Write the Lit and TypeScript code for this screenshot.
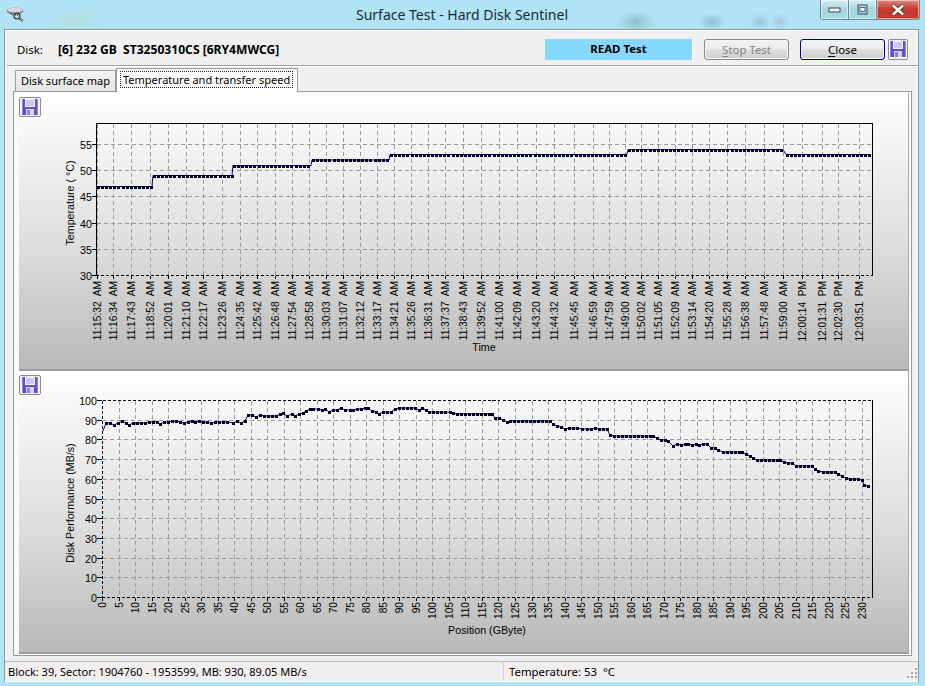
import {LitElement, html, css, svg} from 'lit';
import {customElement} from 'lit/decorators.js';

const TIMES = [
  '11:15:32 AM', '11:16:34 AM', '11:17:43 AM', '11:18:52 AM', '11:20:01 AM', '11:21:10 AM',
  '11:22:17 AM', '11:23:26 AM', '11:24:35 AM', '11:25:42 AM', '11:26:48 AM', '11:27:54 AM',
  '11:28:58 AM', '11:30:03 AM', '11:31:07 AM', '11:32:12 AM', '11:33:17 AM', '11:34:21 AM',
  '11:35:26 AM', '11:36:31 AM', '11:37:37 AM', '11:38:43 AM', '11:39:52 AM', '11:41:00 AM',
  '11:42:09 AM', '11:43:20 AM', '11:44:32 AM', '11:45:45 AM', '11:46:59 AM', '11:47:59 AM',
  '11:49:00 AM', '11:50:02 AM', '11:51:05 AM', '11:52:09 AM', '11:53:14 AM', '11:54:20 AM',
  '11:55:28 AM', '11:56:38 AM', '11:57:48 AM', '11:59:00 AM', '12:00:14 PM', '12:01:31 PM',
  '12:02:30 PM', '12:03:51 PM',
];

// x position of a time label, the axis is linear in seconds
const timeX = (t: string) => {
  const [h, m, s] = t.split(' ')[0].split(':').map(Number);
  return Math.round(97 + (h * 3600 + m * 60 + s - 40532) * 0.2629);
};

// temperature runs: from x, to x, y
const TEMP_RUNS = [
  [97, 152, 187.5],
  [153, 232, 176.5],
  [233, 311, 166.5],
  [312, 389, 161],
  [390, 627, 155.5],
  [628, 783, 150.5],
  [786, 871, 155.5],
];

// read from the reference, x then y in page pixels
const PERF: number[][] = [
  [106,424],[110,424],[114,426],[118,424],[122,422],[126,424],[129,426],[133,424],[137,424],[141,424],
  [145,424],[149,423],[153,423],[157,423],[160,425],[164,423],[168,423],[172,422],[176,422],[180,423],
  [184,424],[188,423],[192,422],[195,423],[199,422],[203,423],[207,423],[211,424],[215,423],[219,423],
  [223,423],[227,423],[233,424],[237,422],[241,424],[245,422],[248,416],[252,416],[256,418],[260,416],
  [264,417],[268,417],[272,417],[276,417],[280,415],[283,414],[287,417],[292,415],[295,417],[299,415],
  [303,414],[306,412],[310,410],[313,410],[318,410],[322,411],[325,410],[329,413],[333,411],[337,411],
  [341,409],[345,411],[350,411],[353,411],[357,410],[361,410],[365,409],[368,409],[372,412],[376,413],
  [379,415],[383,413],[387,413],[391,413],[395,410],[399,409],[403,409],[407,409],[411,409],[415,409],
  [419,411],[422,409],[426,411],[429,413],[433,413],[437,413],[441,413],[445,413],[450,413],[453,414],
  [457,415],[461,415],[465,415],[469,415],[473,415],[477,415],[481,415],[485,415],[489,415],[492,415],
  [495,419],[499,419],[503,421],[507,423],[510,422],[514,422],[518,422],[522,422],[526,422],[530,422],
  [534,422],[538,422],[542,422],[546,422],[550,422],[553,425],[557,427],[561,428],[565,430],[569,429],
  [573,429],[577,429],[582,430],[587,430],[591,430],[595,429],[599,430],[603,430],[607,430],[610,436],
  [614,437],[618,437],[622,437],[626,437],[630,437],[634,437],[638,437],[642,437],[646,437],[650,437],
  [653,437],[657,439],[661,441],[665,441],[668,442],[673,447],[677,445],[681,446],[685,445],[688,445],
  [692,446],[696,445],[699,446],[703,445],[707,445],[711,449],[715,449],[718,451],[723,453],[727,453],
  [731,453],[735,453],[739,453],[742,453],[746,455],[750,457],[753,459],[757,461],[761,461],[765,461],
  [769,461],[773,461],[777,461],[780,461],[784,463],[788,464],[792,464],[796,467],[800,467],[804,467],
  [808,467],[812,467],[815,470],[818,472],[823,473],[827,473],[831,473],[835,473],[838,475],[842,477],
  [846,479],[850,480],[854,480],[858,480],[862,481],[864,486],[868,487],
];

const squares = (pts: number[][]) =>
  pts.map(([x, y]) => `M${x - 1} ${Math.round(y) - 1}h3v3h-3z`).join('');

const floppy = () => html`<svg class="floppy" viewBox="0 0 16 16">
  <path d="M0 0H15L16 1V16H0Z" fill="#5f50cc"/>
  <path d="M0 0H1V16H0ZM15 1H16V16H15Z" fill="#8f84e2"/>
  <rect x="3" y="0" width="10" height="8" fill="#f4f2ff"/>
  <path d="M4 2H12M4 4H12M4 6H12" stroke="#a79cec" stroke-width="1"/>
  <rect x="4" y="10" width="8" height="6" fill="#d6d2ee"/>
  <rect x="5" y="11" width="3" height="5" fill="#8d82d8"/>
</svg>`;

@customElement('app-root')
class AppRoot extends LitElement {
  static override styles = css`
    :host {
      display: flex;
      flex-direction: column;
      width: 925px;
      height: 686px;
      overflow: hidden;
      font-family: 'Noto Sans', 'Open Sans', sans-serif;
      font-size: 11.4px;
      color: #000;
      background:
        radial-gradient(ellipse 20px 11px at 636px 22px, #8fc0cc, transparent),
        radial-gradient(ellipse 14px 9px at 712px 22px, #8fc3d2, transparent),
        radial-gradient(ellipse 10px 9px at 760px 22px, #a0c4e0, transparent),
        radial-gradient(ellipse 10px 9px at 780px 22px, #a8c8e2, transparent),
        radial-gradient(ellipse 26px 14px at 75px 22px, #b4e0dc, transparent),
        #b0e3f4;
    }

    .titlebar {
      display: grid;
      grid-template-columns: 1fr auto 1fr;
      height: 29px;
      flex: none;
    }

    .app-icon {
      width: 20px;
      height: 20px;
      margin: 4px 0 0 5px;
    }

    .title {
      font-size: 14px;
      line-height: 29px;
      color: #1a2a33;
      padding-left: 1px;
      padding-right: 2px;
      white-space: nowrap;
    }

    .win-buttons {
      justify-self: end;
      display: flex;
      height: 20px;
      margin-right: 5px;
      border: 1px solid #6f8794;
      border-top: none;
      border-radius: 0 0 3px 3px;
      box-sizing: border-box;
      width: 100px;
      overflow: hidden;
    }

    .win-btn {
      display: flex;
      align-items: center;
      justify-content: center;
      width: 27px;
      border-right: 1px solid #6f8794;
      background: linear-gradient(#d4edf6, #a8d6e2 50%, #a5dbe6);
      box-shadow: inset 0 0 0 1px #ffffff80;
    }

    .win-close {
      flex: 1;
      border-right: none;
      background: linear-gradient(#dc8a80, #c6392f 50%, #c23a30);
    }

    .client {
      flex: 1;
      display: flex;
      flex-direction: column;
      margin: 0 6px 4px 4px;
      border: 1px solid #8b9aa3;
      border-bottom: none;
      background: #f0f0f0;
      box-shadow: inset 0 0 0 1px #ffffff;
    }

    .header {
      flex: none;
      height: 36px;
      box-sizing: border-box;
      display: flex;
      align-items: center;
      padding: 0 10px 0 10px;
      margin-left: 2px;
      border-bottom: 1px solid #a3a3a3;
      box-shadow: 0 1px 0 #fff;
    }

    .disk-label {
      width: 41px;
      margin-top: 3px;
    }

    .disk-name {
      font-size: 12.1px;
      font-weight: 700;
      white-space: pre;
      flex: 1;
      margin-top: 3px;
    }

    .status-box {
      width: 147px;
      height: 21px;
      margin-top: 3px;
      background: #87d8fe;
      border-right: 1px solid #fff;
      text-align: center;
      font-weight: 700;
      line-height: 20px;
      margin-right: 11px;
    }

    .btn {
      width: 85px;
      height: 21px;
      margin-top: 3px;
      box-sizing: border-box;
      border: 1px solid #8a8a8a;
      border-radius: 3px;
      text-align: center;
      line-height: 19px;
      background: linear-gradient(#f3f3f3, #ebebeb 48%, #dcdcdc 52%, #cfcfcf);
      box-shadow: inset 0 0 0 1px #f6f6f6;
    }

    .btn u {
      text-underline-offset: 2px;
    }

    .btn-off {
      color: #838383;
      margin-right: 11px;
    }

    .btn-main {
      border-color: #000080;
    }

    .icon-btn {
      flex: none;
      width: 20px;
      height: 21px;
      box-sizing: border-box;
      border: 1px solid #8c8c8c;
      border-radius: 2px;
      background: #f5f5f5;
      display: flex;
      align-items: center;
      justify-content: center;
    }

    .head-save {
      margin: 3px 0 0 3px;
    }

    .floppy {
      width: 16px;
      height: 16px;
      display: block;
    }

    .tabs {
      flex: none;
      height: 25px;
      display: flex;
      align-items: flex-end;
      padding-left: 10px;
      position: relative;
      z-index: 1;
      font-size: 11px;
    }

    .tab {
      box-sizing: border-box;
      height: 21px;
      width: 101px;
      border: 1px solid #9a9a9a;
      border-bottom: none;
      padding-left: 5px;
      line-height: 20px;
      white-space: nowrap;
      background: linear-gradient(#f4f4f4, #e4e4e4);
    }

    .tab-on {
      height: 24px;
      width: 182px;
      margin-bottom: -1px;
      padding: 2px 0 0 3px;
      background: #fff;
      line-height: 17px;
    }

    .tab-on span {
      display: block;
      width: 173px;
      height: 17px;
      padding-left: 3px;
      box-sizing: border-box;
      outline: 1px dotted #222;
      outline-offset: -1px;
    }

    .sheet {
      margin: 0 6px 0 8px;
      height: 565px;
      box-sizing: border-box;
      border: 1px solid #9a9a9a;
      background: #fafafa;
      padding: 1px 2px 1px 5px;
      display: flex;
      flex-direction: column;
    }

    .panel {
      flex: none;
      position: relative;
      box-sizing: border-box;
      border-bottom: 2px solid #9d9d9d;
      border-right: 1px solid #a8a8a8;
      background: linear-gradient(#fff, #fafafa 8%, #dedede 55%, #b9b9b9);
    }

    .panel-top {
      height: 278px;
    }

    .panel-bottom {
      height: 283px;
    }

    .panel .icon-btn {
      width: 22px;
      height: 20px;
      margin-top: 4px;
      background: #f3f3f3;
    }

    .plot {
      position: absolute;
      left: 0;
      top: 0;
      width: 889px;
      height: 100%;
      display: block;
    }

    .plot text {
      font-family: 'Liberation Sans', Arial, sans-serif;
      font-size: 10.7px;
      fill: #000;
    }

    .plot .tick {
      font-size: 10.2px;
      white-space: pre;
    }

    .grid {
      stroke: #9a9a9a;
      stroke-dasharray: 4 3;
      fill: none;
      shape-rendering: crispEdges;
    }

    .axis {
      stroke: #000;
      fill: none;
      shape-rendering: crispEdges;
    }

    .dash {
      stroke-dasharray: 3 2;
    }

    .series {
      stroke: #00008a;
      fill: none;
    }

    .marks {
      fill: #000020;
      shape-rendering: crispEdges;
    }

    .statusbar {
      flex: none;
      display: flex;
      height: 18px;
      margin-top: 5px;
      border-top: 1px solid #bcbcbc;
      background: #f1eeee;
      line-height: 19px;
      position: relative;
    }

    .cell-a {
      width: 495px;
      padding-left: 3px;
      border-right: 1px solid #d6d3d3;
      white-space: nowrap;
      font-size: 11px;
    }

    .cell-b {
      padding-left: 5px;
      white-space: pre;
    }

    .grip {
      position: absolute;
      right: 0;
      bottom: 1px;
      width: 12px;
      height: 12px;
    }
  `;

  private renderTempPlot() {
    const xs = TIMES.map(timeX);
    const marks: number[][] = [];
    for (const [from, to, y] of TEMP_RUNS) {
      for (let x = from + 1; x <= to; x += 4.1) marks.push([Math.round(x), y]);
    }
    const line = TEMP_RUNS.map(([from, to, y]) => `${from},${y} ${to},${y}`).join(' ');
    const yTicks: [string, number][] = [['55', 145.5], ['50', 171.5], ['45', 197.5], ['40', 224.5], ['35', 250.5]];
    return svg`<svg class="plot" viewBox="19 94 889 276">
      ${xs.map((x) => svg`<path class="grid" d="M${x + 0.5} 125V276"/>`)}
      ${yTicks.map(([, y]) => svg`<path class="grid" d="M97 ${y}H872"/>`)}
      <path class="axis" d="M96.5 276V124.5H872.5V276"/>
      <path class="axis dash" d="M96 276.5H873"/>
      ${yTicks.map(([, y]) => svg`<path class="axis" d="M92 ${y}H97"/>`)}
      <path class="axis" d="M92 276.5H97"/>
      ${xs.map((x) => svg`<path class="axis" d="M${x + 0.5} 277V280"/>`)}
      <polyline class="series" points=${line}/>
      <path class="marks" d=${squares(marks)}/>
      ${[...yTicks, ['30', 276.5] as [string, number]].map(([t, y]) => svg`<text x="92" y=${y + 4} text-anchor="end">${t}</text>`)}
      ${TIMES.map((t, i) => svg`<text class="tick" text-anchor="end" transform="translate(${xs[i] + 3.5} 282) rotate(-90)">${t.replace(' ', '  ')}</text>`)}
      <text x="484" y="352" text-anchor="middle">Time</text>
      <text text-anchor="middle" transform="translate(74 204) rotate(-90)">Temperature ( °C)</text>
    </svg>`;
  }

  private renderPerfPlot() {
    const xs = Array.from({length: 47}, (_, i) => Math.round(102 + i * 16.52));
    const yAt = (v: number) => Math.round(598 - v * 1.97) + 0.5;
    const vals = [100, 90, 80, 70, 60, 50, 40, 30, 20, 10, 0];
    const line = [[103, 432], ...PERF].map(([x, y]) => `${x},${y}`).join(' ');
    return svg`<svg class="plot" viewBox="19 372 889 281">
      ${xs.slice(1).map((x) => svg`<path class="grid" d="M${x + 0.5} 402V598"/>`)}
      ${vals.slice(1, -1).map((v) => svg`<path class="grid" d="M103 ${yAt(v)}H872"/>`)}
      <path class="axis" d="M872.5 401V599"/>
      <path class="axis dash" d="M102.5 401.5H872M102.5 402V598M102 598.5H873"/>
      ${vals.map((v) => svg`<path class="axis" d="M97 ${yAt(v)}H102"/>`)}
      ${xs.map((x) => svg`<path class="axis" d="M${x + 0.5} 599V602"/>`)}
      <polyline class="series" points=${line}/>
      <path class="marks" d=${squares(PERF)}/>
      ${vals.map((v) => svg`<text x="97" y=${yAt(v) + 4} text-anchor="end">${v}</text>`)}
      ${xs.map((x, i) => svg`<text class="tick" text-anchor="end" transform="translate(${x + 3.5} 603) rotate(-90)">${i * 5}</text>`)}
      <text x="487" y="635" text-anchor="middle">Position (GByte)</text>
      <text text-anchor="middle" transform="translate(74 504) rotate(-90)">Disk Performance (MB/s)</text>
    </svg>`;
  }

  override render() {
    return html`
      <div class="titlebar">
        <svg class="app-icon" viewBox="0 0 20 20">
          <ellipse cx="10" cy="7" rx="8.5" ry="3.4" fill="#85898c"/>
          <ellipse cx="10" cy="6" rx="7.5" ry="2.4" fill="#d4d6d8"/>
          <path d="M5 9l3 2M10 9v3M14 9l-2 3" stroke="#333" stroke-width="1"/>
          <circle cx="12" cy="12" r="3" fill="none" stroke="#333" stroke-width="1.2"/>
          <path d="M14 14l4 3" stroke="#555" stroke-width="2.2"/>
          <path d="M15 14.5l3 2.2" stroke="#ddd" stroke-width="0.8"/>
        </svg>
        <div class="title">Surface Test - Hard Disk Sentinel</div>
        <div class="win-buttons">
          <div class="win-btn">
            <svg width="13" height="7" viewBox="0 0 13 7"><rect x="1" y="2" width="11" height="4" fill="#e8f4f8" stroke="#3a4a52"/></svg>
          </div>
          <div class="win-btn">
            <svg width="11" height="11" viewBox="0 0 11 11"><rect x="1" y="1" width="9" height="9" fill="none" stroke="#3a4a52"/><rect x="3" y="3.5" width="5" height="4" fill="#e8f4f8" stroke="#3a4a52" stroke-width="0.8"/></svg>
          </div>
          <div class="win-btn win-close">
            <svg width="14" height="12" viewBox="0 0 14 12"><path d="M2 1.5L12 10.5M12 1.5L2 10.5" stroke="#3f2522" stroke-width="4"/><path d="M2 1.5L12 10.5M12 1.5L2 10.5" stroke="#fff" stroke-width="2.6"/></svg>
          </div>
        </div>
      </div>
      <div class="client">
        <div class="header">
          <div class="disk-label">Disk:</div>
          <div class="disk-name">[6] 232 GB  ST3250310CS [6RY4MWCG]</div>
          <div class="status-box">READ Test</div>
          <div class="btn btn-off"><u>S</u>top Test</div>
          <div class="btn btn-main"><u>C</u>lose</div>
          <div class="icon-btn head-save">${floppy()}</div>
        </div>
        <div class="tabs">
          <div class="tab">Disk surface map</div>
          <div class="tab tab-on"><span>Temperature and transfer speed</span></div>
        </div>
        <div class="sheet">
          <div class="panel panel-top">
            ${this.renderTempPlot()}
            <div class="icon-btn">${floppy()}</div>
          </div>
          <div class="panel panel-bottom">
            ${this.renderPerfPlot()}
            <div class="icon-btn">${floppy()}</div>
          </div>
        </div>
        <div class="statusbar">
          <div class="cell-a">Block: 39, Sector: 1904760 - 1953599, MB: 930, 89.05 MB/s</div>
          <div class="cell-b">Temperature: 53  °C</div>
          <svg class="grip" viewBox="0 0 12 12">
            <path d="M9 1h2v2H9zM5 5h2v2H5zM9 5h2v2H9zM1 9h2v2H1zM5 9h2v2H5zM9 9h2v2H9z" fill="#a9a9a9"/>
          </svg>
        </div>
      </div>
    `;
  }
}

declare global {
  interface HTMLElementTagNameMap {
    'app-root': AppRoot;
  }
}
